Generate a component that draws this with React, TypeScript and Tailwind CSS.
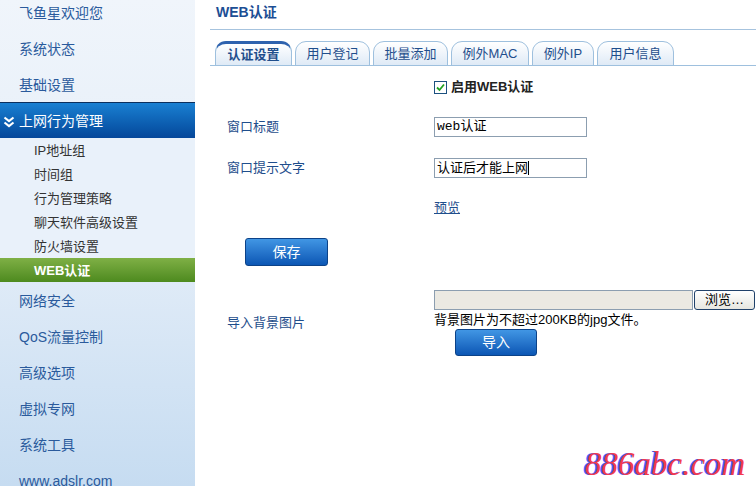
const font = { fontFamily: '"Liberation Sans", "Noto Sans CJK SC", sans-serif' };

const topItems1 = ["系统状态", "基础设置"];
const subItems = ["IP地址组", "时间组", "行为管理策略", "聊天软件高级设置", "防火墙设置"];
const topItems2 = ["网络安全", "QoS流量控制", "高级选项", "虚拟专网", "系统工具", "www.adslr.com"];
const tabs = [
  { label: "认证设置", w: "w-[77px]" },
  { label: "用户登记", w: "w-[75px]" },
  { label: "批量添加", w: "w-[75px]" },
  { label: "例外MAC", w: "w-[78px]" },
  { label: "例外IP", w: "w-[62px]" },
  { label: "用户信息", w: "w-[77px]" },
];

const Sidebar = () => {
  return (
    <div className="w-[195px] shrink-0 h-[486px] overflow-hidden bg-gradient-to-b from-[#f0f5fb] via-[#e3edf8] to-[#c6dcf1]">
      <div className="h-[30px] pb-[4px] pl-[19px] flex items-center text-[14px] text-[#2a5a9c]">飞鱼星欢迎您</div>
      {topItems1.map((t) => (
        <div key={t} className="h-[36px] pt-[2px] pl-[19px] flex items-center text-[14px] text-[#2a5a9c]">
          {t}
        </div>
      ))}
      <div className="h-[36px] pt-[2px] flex items-center border-t border-[#0b2f5e] bg-gradient-to-b from-[#1a80d2] to-[#06479a] text-white text-[14px]">
        <svg width="12" height="12" viewBox="0 0 12 12" className="ml-[3px] mr-[4px]">
          <path d="M1.5 1.5 L6 5 L10.5 1.5" stroke="white" strokeWidth="2.2" fill="none" />
          <path d="M1.5 6.5 L6 10 L10.5 6.5" stroke="white" strokeWidth="2.2" fill="none" />
        </svg>
        上网行为管理
      </div>
      <div className="bg-[#e9f1fa]">
        {subItems.map((t) => (
          <div key={t} className="h-[24px] pt-[1px] pl-[34px] flex items-center text-[13px] text-[#333]">
            {t}
          </div>
        ))}
      </div>
      <div className="h-[24px] pt-[1px] pl-[34px] flex items-center text-[13px] font-bold text-white bg-gradient-to-b from-[#7fb045] to-[#4d8a1e]">
        WEB认证
      </div>
      {topItems2.map((t) => (
        <div key={t} className="h-[36px] pt-[2px] pl-[19px] flex items-center text-[14px] text-[#2a5a9c]">
          {t}
        </div>
      ))}
    </div>
  );
};

const BlueButton = ({ label, w, h }: { label: string; w: string; h: string }) => (
  <div
    className={`${w} ${h} flex items-center justify-center rounded-[3px] border border-[#0c4288] bg-gradient-to-b from-[#4196e4] to-[#0b56b4] text-white text-[14px]`}
  >
    {label}
  </div>
);

export default function App() {
  return (
    <div className="relative w-[756px] h-[486px] flex bg-white overflow-hidden" style={font}>
      <Sidebar />
      <div className="flex-1 pl-[15px]">
        <div className="h-[30px] pl-[6px] pb-[5px] flex items-center text-[14px] font-bold text-[#1c4e94] border-b border-[#a6c3de]">
          WEB认证
        </div>
        {/* Tabs */}
        <div className="mt-[11px] pl-[5px] flex items-end gap-[3px] h-[25px] border-b border-[#9ec0de]">
          {tabs.map((t, i) => (
            <div
              key={t.label}
              className={`${t.w} h-[25px] -mb-px flex items-center justify-center rounded-t-[11px] border border-[#9ec0de] text-[13px] text-[#1f4e8c] bg-gradient-to-b from-white to-[#dfeaf6] ${
                i === 0 ? "border-t-[3px] border-t-[#2e62ae] font-bold" : ""
              }`}
            >
              {t.label}
            </div>
          ))}
        </div>
        {/* Form */}
        <div className="pl-[17px] pt-[1px] grid grid-cols-[207px_1fr] text-[13px]">
          <div className="h-[40px]" />
          <div className="h-[40px] flex items-center gap-[4px]">
            <div className="w-[13px] h-[13px] border border-[#1c5180] bg-white flex items-center justify-center">
              <svg width="9" height="9" viewBox="0 0 9 9">
                <path d="M1 4.5 L3.5 7 L8 1.5" stroke="#21a121" strokeWidth="1.8" fill="none" />
              </svg>
            </div>
            <span className="font-bold text-[#222]">启用WEB认证</span>
          </div>

          <div className="h-[40px] flex items-center text-[#1f4e8c]">窗口标题</div>
          <div className="h-[40px] flex items-center">
            <div
              className="w-[153px] h-[20px] border border-[#8c9eb0] px-[2px] flex items-center text-[13px] text-black"
              style={{ fontFamily: '"Liberation Mono", "Noto Sans CJK SC", monospace' }}
            >
              web认证
            </div>
          </div>

          <div className="h-[42px] flex items-center text-[#1f4e8c]">窗口提示文字</div>
          <div className="h-[42px] flex items-center">
            <div className="w-[153px] h-[20px] border border-[#8c9eb0] px-[2px] flex items-center text-[13px] text-black">
              认证后才能上网<span className="w-px h-[14px] bg-black" />
            </div>
          </div>

          <div className="h-[38px]" />
          <div className="h-[38px] flex items-center">
            <span className="underline text-[#1f4e8c]">预览</span>
          </div>

          <div className="col-span-2 mt-[11px] pl-[18px]">
            <BlueButton label="保存" w="w-[83px]" h="h-[28px]" />
          </div>

          <div className="mt-[24px] h-[65px] flex items-center text-[#1f4e8c]">导入背景图片</div>
          <div className="mt-[24px] h-[65px] flex flex-col">
            <div className="flex items-center gap-[1px]">
              <div className="w-[259px] h-[20px] border border-[#8c9eb0] bg-[#ebe9e2]" />
              <div className="w-[61px] h-[20px] rounded-[3px] border border-[#20416a] bg-gradient-to-b from-white to-[#e6e6e0] flex items-center justify-center text-[13px] text-black">
                浏览…
              </div>
            </div>
            <div className="h-[19px] flex items-center text-black">背景图片为不超过200KB的jpg文件。</div>
            <div className="pl-[21px]">
              <BlueButton label="导入" w="w-[82px]" h="h-[27px]" />
            </div>
          </div>
        </div>
      </div>
      <div
        className="absolute left-[585px] top-[444px] text-[33px] leading-[40px] italic text-[#f23a4f]"
        style={{ fontFamily: '"Liberation Serif", serif', textShadow: "-2px 0 0 #4a5cff" }}
      >
        886abc.com
      </div>
    </div>
  );
}
